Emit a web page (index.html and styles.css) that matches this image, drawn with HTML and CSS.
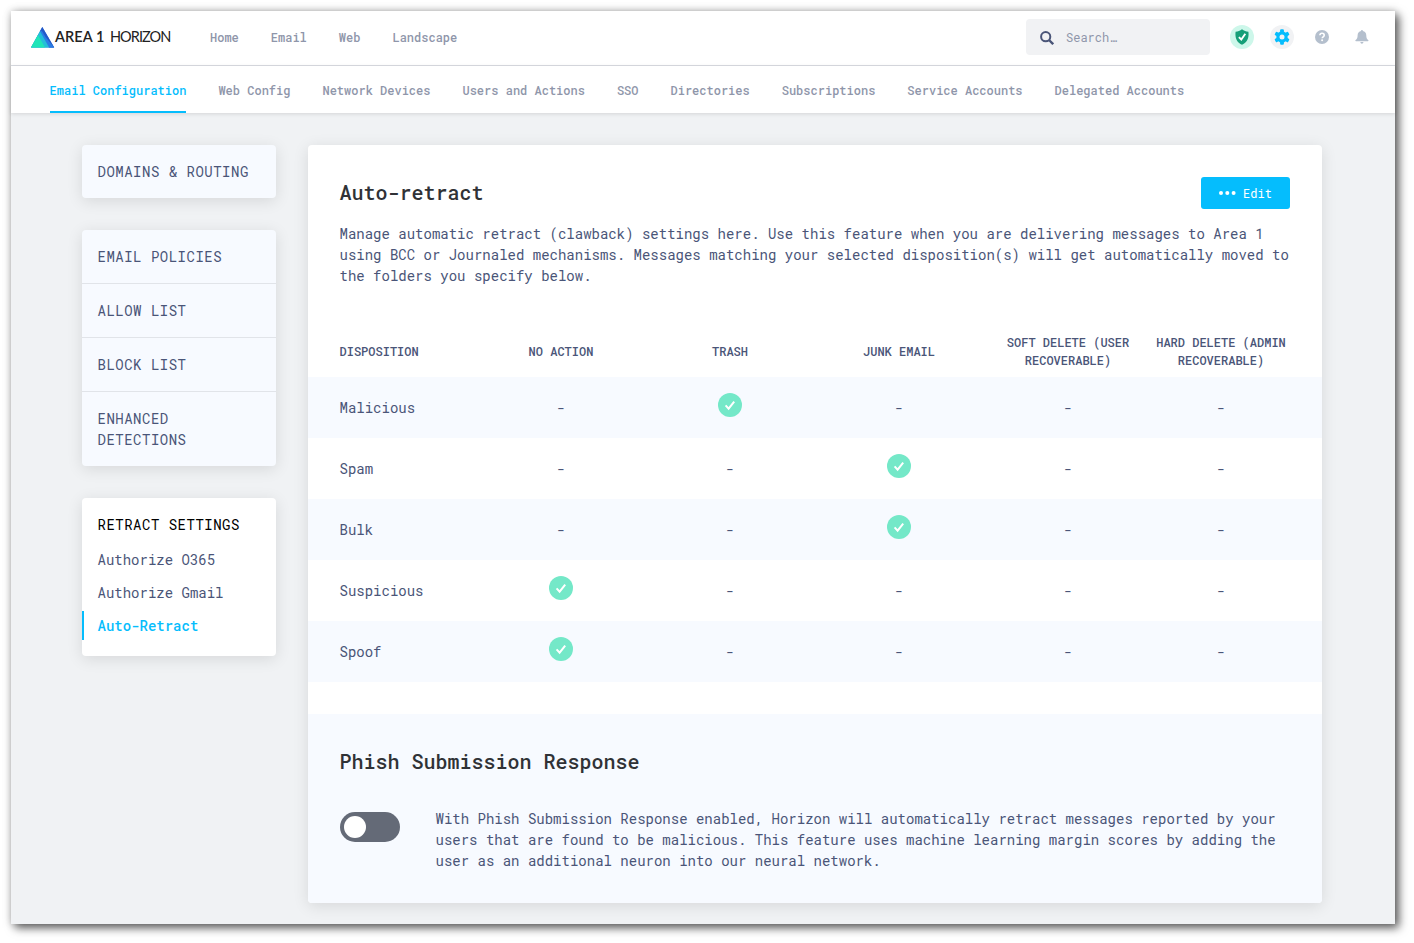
FILE: index.html
```
<!DOCTYPE html>
<html lang="en">
<head>
<meta charset="utf-8">
<title>Area 1 Horizon</title>
<link rel="stylesheet" href="styles.css">
</head>
<body>
<svg class="defs" width="0" height="0">
  <symbol id="check" viewBox="0 0 24 24"><circle cx="12" cy="12" r="12" fill="#74e8c8"/><path d="M7.600 12.400l3 3.200 5.600-7" fill="none" stroke="#fff" stroke-width="2"/></symbol>
</svg>
<div class="window">
  <header class="topbar">
    <a class="logo">
      <svg width="24" height="21" viewBox="0 0 24 21"><path d="M11.300 0L0 20.500h23.200z" fill="#2878dc"/><path d="M11.300 0L9 4.200 18.200 20.500h5z" fill="#2458c8"/><path d="M14.500 10l-3.700-6.200L8.800 4.600l9 15.900h5.400z" fill="#2a7de4"/><path d="M9 4.200L0 20.500h18.200z" fill="#25bed8"/><path d="M7 8L0 20.500h14z" fill="#1fe5b8"/></svg>
      <span class="brand">AREA 1</span><span class="product">HORIZON</span>
    </a>
    <nav class="main-nav"><a>Home</a><a>Email</a><a>Web</a><a>Landscape</a></nav>
    <div class="search">
      <svg width="14" height="14" viewBox="0 0 14 14" fill="none" stroke="#4a5578" stroke-width="2"><circle cx="5.700" cy="5.700" r="4.600"/><path d="M9 9l4.200 4.200" stroke-width="2.400"/></svg>
      <span>Search…</span>
    </div>
    <div class="tools">
      <span class="tool tool-green"><svg width="14" height="16" viewBox="0 0 14 16"><path d="M7 .2C5 1.600 3 2.500 .6 2.800-.2 9 2 13.500 7 15.700c5-2.200 7.200-6.700 6.400-12.900C11 2.500 9 1.600 7 .2z" fill="#169f78"/><path d="M3.900 8.100l2.400 2.400 4-5.700" fill="none" stroke="#fff" stroke-width="1.900"/></svg></span>
      <span class="tool tool-gray"><svg width="16" height="16" viewBox="-8 -8 16 16"><g fill="#05bdfd"><circle r="5.700"/><rect x="-1.900" y="-7.700" width="3.800" height="15.400" rx="1"/><rect x="-1.900" y="-7.700" width="3.800" height="15.400" rx="1" transform="rotate(60)"/><rect x="-1.900" y="-7.700" width="3.800" height="15.400" rx="1" transform="rotate(120)"/></g><circle r="2.500" fill="#f1f2f4"/></svg></span>
      <span class="tool"><svg width="14" height="14" viewBox="0 0 14 14"><circle cx="7" cy="7" r="7" fill="#b4bfcd"/><path d="M4.900 5.300C5 3.900 5.900 3.300 7 3.300c1.300 0 2.200.7 2.200 1.900 0 1.600-2 1.600-2 3" fill="none" stroke="#fff" stroke-width="1.600"/><circle cx="7.100" cy="10.300" r="1" fill="#fff"/></svg></span>
      <span class="tool"><svg width="14" height="14" viewBox="0 0 14 14" fill="#b4bfcd"><path d="M6.200 0h1.500v1.100c2.300.4 3.600 2 3.600 4.300 0 2.300.5 3.500 1.900 4.500.5.400.3 1.300-.4 1.300H1c-.7 0-.9-.9-.4-1.300C2 8.900 2.600 7.700 2.600 5.400c0-2.300 1.300-3.900 3.600-4.300zM5.400 12.100h3c0 2.300-3 2.300-3 0z"/></svg></span>
    </div>
  </header>
  <nav class="subnav">
    <a class="active">Email Configuration</a><a>Web Config</a><a>Network Devices</a><a>Users and Actions</a><a>SSO</a><a>Directories</a><a>Subscriptions</a><a>Service Accounts</a><a>Delegated Accounts</a>
  </nav>
  <div class="content">
    <aside class="sidebar">
      <div class="group"><a class="entry">DOMAINS &amp; ROUTING</a></div>
      <div class="group">
        <a class="entry">EMAIL POLICIES</a>
        <a class="entry">ALLOW LIST</a>
        <a class="entry">BLOCK LIST</a>
        <a class="entry">ENHANCED DETECTIONS</a>
      </div>
      <div class="group group-open">
        <div class="group-title">RETRACT SETTINGS</div>
        <a class="sub">Authorize O365</a>
        <a class="sub">Authorize Gmail</a>
        <a class="sub current">Auto-Retract</a>
      </div>
    </aside>
    <main class="card">
      <section class="intro">
        <div class="heading">
          <h1>Auto-retract</h1>
          <button class="edit"><svg width="17" height="4" viewBox="0 0 17 4" fill="#fff"><circle cx="2" cy="2" r="2"/><circle cx="8.300" cy="2" r="2"/><circle cx="14.600" cy="2" r="2"/></svg>Edit</button>
        </div>
        <p>Manage automatic retract (clawback) settings here. Use this feature when you are delivering messages to Area 1<br>using BCC or Journaled mechanisms. Messages matching your selected disposition(s) will get automatically moved to<br>the folders you specify below.</p>
      </section>
      <table class="dispositions">
        <thead><tr><th>DISPOSITION</th><th>NO ACTION</th><th>TRASH</th><th>JUNK EMAIL</th><th>SOFT DELETE (USER<br>RECOVERABLE)</th><th>HARD DELETE (ADMIN<br>RECOVERABLE)</th></tr></thead>
        <tbody>
          <tr><td>Malicious</td><td>-</td><td><svg class="check"><use href="#check"/></svg></td><td>-</td><td>-</td><td>-</td></tr>
          <tr><td>Spam</td><td>-</td><td>-</td><td><svg class="check"><use href="#check"/></svg></td><td>-</td><td>-</td></tr>
          <tr><td>Bulk</td><td>-</td><td>-</td><td><svg class="check"><use href="#check"/></svg></td><td>-</td><td>-</td></tr>
          <tr><td>Suspicious</td><td><svg class="check"><use href="#check"/></svg></td><td>-</td><td>-</td><td>-</td><td>-</td></tr>
          <tr><td>Spoof</td><td><svg class="check"><use href="#check"/></svg></td><td>-</td><td>-</td><td>-</td><td>-</td></tr>
        </tbody>
      </table>
      <section class="phish">
        <h2>Phish Submission Response</h2>
        <div class="option">
          <span class="toggle"><i></i></span>
          <p>With Phish Submission Response enabled, Horizon will automatically retract messages reported by your<br>users that are found to be malicious. This feature uses machine learning margin scores by adding the<br>user as an additional neuron into our neural network.</p>
        </div>
      </section>
    </main>
  </div>
</div>
</body>
</html>
```
FILE: styles.css
```
* { box-sizing: border-box; }
body {
  margin: 0;
  padding: 11px;
  height: 943px;
  overflow: hidden;
  background: #fff;
  color: #4a5578;
  font: 14px/21px "Roboto Mono", "DejaVu Sans Mono", monospace;
}
.defs { display: block; position: absolute; }
h1, h2, p { margin: 0; }
.window {
  width: 1384px;
  height: 913px;
  background: #f0f2f4;
  box-shadow: 4px 4px 9px rgba(0, 0, 0, .6), 0 0 8px rgba(0, 0, 0, .22);
}
.topbar {
  display: flex;
  align-items: center;
  height: 55px;
  padding: 0 21px 2px 20px;
  background: #fff;
  border-bottom: 1px solid #d9dce2;
}
.logo {
  display: flex;
  align-items: center;
  width: 179px;
  color: #222;
  font: 14.500px/20px Lato, sans-serif;
}
.brand {
  width: 55px;
  font-weight: 600;
  letter-spacing: .1px;
  white-space: nowrap;
}
.product { letter-spacing: -.95px; }
.main-nav, .subnav {
  display: flex;
  gap: 32px;
  font-size: 12px;
  font-weight: 500;
  line-height: 18px;
  color: #8f96aa;
}
.search {
  display: flex;
  align-items: center;
  gap: 12px;
  width: 184px;
  height: 36px;
  margin-left: auto;
  padding: 1px 14px 0;
  border-radius: 4px;
  background: #f1f2f4;
  color: #8f96aa;
  font-size: 12px;
}
.tools { display: flex; gap: 16px; margin-left: 20px; }
.tool {
  display: flex;
  align-items: center;
  justify-content: center;
  width: 24px;
  height: 24px;
  border-radius: 50%;
}
.tool-green { background: #cdf7ea; }
.tool-gray { background: #f1f2f4; }
.subnav {
  height: 47px;
  padding-left: 38.600px;
  background: #fff;
  box-shadow: 0 1px 4px rgba(0, 0, 0, .12);
}
.subnav a { height: 47px; padding-top: 15px; }
.subnav .active { color: #05bdfd; border-bottom: 2px solid #05bdfd; }
.content { display: flex; align-items: flex-start; gap: 32px; padding: 32px 0 0 71px; }
.sidebar { display: flex; flex-direction: column; gap: 32px; width: 194px; }
.group {
  background: #f7faff;
  border-radius: 4px;
  box-shadow: 0 3px 16px rgba(0, 0, 0, .11);
  letter-spacing: .5px;
}
.entry { display: block; padding: 16px 15.500px; }
.entry + .entry { border-top: 1px solid #e1e4e9; }
.group-open { height: 158px; padding-top: 16px; background: #fff; }
.group-title { padding-left: 15.500px; margin-bottom: 10px; color: #000; }
.sub {
  display: block;
  height: 29px;
  margin-bottom: 4px;
  padding-left: 13.500px;
  border-left: 2px solid transparent;
  line-height: 29px;
  letter-spacing: 0;
}
.current { color: #05bdfd; border-color: #05bdfd; font-weight: 500; }
.card {
  width: 1014px;
  height: 758px;
  background: #fff;
  border-radius: 4px;
  overflow: hidden;
  box-shadow: 0 3px 16px rgba(0, 0, 0, .11);
}
.intro { height: 180px; padding: 32px 0 0 31.500px; white-space: nowrap; }
.heading {
  display: flex;
  justify-content: space-between;
  align-items: center;
  height: 32px;
  margin: 0 32px 14px 0;
}
h1, h2 {
  color: #303236;
  font-size: 20px;
  font-weight: 500;
  line-height: 28px;
}
h1 { margin-top: -2px; }
.edit {
  display: flex;
  align-items: center;
  justify-content: center;
  gap: 7px;
  width: 89px;
  height: 32px;
  padding: 0;
  border: 0;
  border-radius: 3px;
  background: #05bdfd;
  color: #fff;
  font: inherit;
  font-size: 12px;
}
.dispositions { width: 1014px; table-layout: fixed; border-collapse: collapse; }
.dispositions th {
  height: 52px;
  padding: 0 1px 0 0;
  font-size: 12px;
  font-weight: 500;
  line-height: 18px;
  white-space: nowrap;
}
.dispositions td { height: 61px; padding: 0 1px 0 0; text-align: center; }
.dispositions tr > :first-child { padding-left: 31.500px; text-align: left; }
.dispositions tr > :last-child { padding-right: 33px; }
.dispositions tbody tr:nth-child(odd) { background: #f7faff; }
.check { display: block; width: 24px; height: 24px; margin: -5px auto 0; }
.phish { height: 189px; margin-top: 32px; padding: 33px 0 0 31.500px; background: #f7faff; }
.option { display: flex; gap: 36px; margin-top: 33px; white-space: nowrap; }
.toggle {
  width: 60px;
  height: 30px;
  margin-top: 4px;
  padding: 4px;
  border-radius: 15px;
  background: #646a77;
}
.toggle i { display: block; width: 22px; height: 22px; border-radius: 50%; background: #fff; }
```
